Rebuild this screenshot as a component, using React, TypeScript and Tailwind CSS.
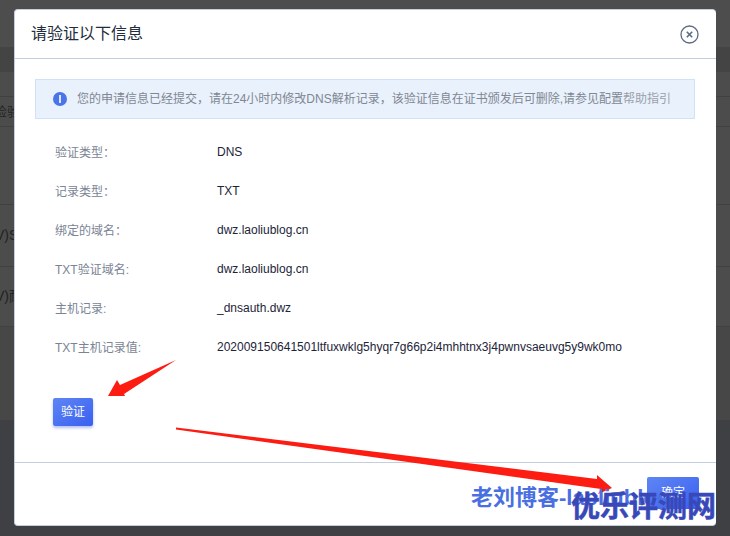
const cjk = "font-['Liberation_Sans','Noto_Sans_CJK_SC',sans-serif]";

const rows: [string, string][] = [
  ["验证类型：", "DNS"],
  ["记录类型：", "TXT"],
  ["绑定的域名：", "dwz.laoliublog.cn"],
  ["TXT验证域名:", "dwz.laoliublog.cn"],
  ["主机记录:", "_dnsauth.dwz"],
  ["TXT主机记录值:", "202009150641501ltfuxwklg5hyqr7g66p2i4mhhtnx3j4pwnvsaeuvg5y9wk0mo"],
];

function Backdrop() {
  return (
    <div className="flex h-[536px] w-[730px] flex-col overflow-hidden bg-[#4c4c4c] text-[13px] text-[#222]">
      <div className="h-[47px] shrink-0 bg-[#4d4d4d]" />
      <div className="h-[25px] shrink-0 bg-[#444444]" />
      <div className="h-[25px] shrink-0 border-b border-[#414141]" />
      <div className="flex h-[30px] shrink-0 items-center border-b border-[#414141]">
        <span className="-ml-[6px] whitespace-nowrap">检验</span>
      </div>
      <div className="h-[78px] shrink-0 border-b border-[#414141]" />
      <div className="flex h-[62px] shrink-0 items-center border-b border-[#414141]">
        <span className="-ml-[5px] whitespace-nowrap text-[14px]">V)S</span>
      </div>
      <div className="flex h-[60px] shrink-0 items-center border-b border-[#414141]">
        <span className="-ml-[5px] whitespace-nowrap text-[14px]">V)耐</span>
      </div>
      <div className="h-[93px] shrink-0 bg-[#474747]" />
      <div className="flex-1 bg-[#3f4044]" />
    </div>
  );
}

function Arrows() {
  return (
    <svg className="pointer-events-none absolute left-0 top-0" width="730" height="536" viewBox="0 0 730 536">
      <polygon points="176,360 124,394 125,396 108,396 117,380 120,385" fill="#fc1c12" />
      <polygon points="176,427.5 597,479 597,475 612,488 598,494 601,489 176,429.5" fill="#fc1c12" />
    </svg>
  );
}

export default function App() {
  return (
    <div className={`relative h-[536px] w-[730px] overflow-hidden ${cjk}`}>
      <Backdrop />
      <div className="absolute left-[14px] top-[9px] flex h-[517px] w-[702px] flex-col rounded-[4px] border border-[#c3cfdd] border-r-0 bg-white">
        <div className="flex h-[49px] shrink-0 items-center justify-between border-b border-[#c3cfdd] pl-[16px] pr-[17px]">
          <span className="text-[16px] text-[#222c3c]">请验证以下信息</span>
          <svg width="19" height="19" viewBox="0 0 19 19" fill="none" stroke="#5a6b82">
            <circle cx="9.5" cy="9.5" r="8.5" strokeWidth="1.3" />
            <path d="M6.8 6.8l5.4 5.4M12.2 6.8l-5.4 5.4" strokeWidth="1.6" />
          </svg>
        </div>
        <div className="flex flex-1 flex-col pl-[20px] pr-[21px] pt-[20px]">
          <div className="flex h-[40px] items-center gap-[10px] border border-[#cfe2f8] bg-[#e9f1fc] pl-[17px] text-[12px] text-[#7f8792]">
            <svg width="14" height="14" viewBox="0 0 14 14">
              <circle cx="7" cy="7" r="7" fill="#4a74e8" />
              <rect x="6.2" y="3" width="1.6" height="8" fill="#fff" />
            </svg>
            <span className="whitespace-nowrap">您的申请信息已经提交，请在24小时内修改DNS解析记录，该验证信息在证书颁发后可删除,请参见配置<span className="text-[#9aa0a8]">帮助指引</span></span>
          </div>
          <div className="mt-[14px] flex flex-col pl-[20px]">
            {rows.map(([label, value]) => (
              <div key={label} className="flex h-[39px] items-center text-[12px]">
                <span className="w-[162px] shrink-0 text-[#7a8494]">{label}</span>
                <span className="whitespace-nowrap pb-[2px] text-[#1c2438]">{value}</span>
              </div>
            ))}
          </div>
          <div className="mt-[31px] pl-[18px]">
            <button className="h-[28px] w-[40px] rounded-[2px] bg-gradient-to-br from-[#5f85f3] to-[#3a5ff0] text-[12px] text-white shadow-[0_2px_3px_rgba(70,100,220,0.4)]">验证</button>
          </div>
        </div>
        <div className="flex h-[63px] shrink-0 items-start justify-end border-t border-[#c3cfdd] pr-[17px] pt-[14px]">
          <button className="h-[32px] w-[52px] rounded-[2px] bg-gradient-to-br from-[#5f85f3] to-[#3a5ff0] text-[12px] text-white">确定</button>
        </div>
      </div>
      <Arrows />
      <span className="absolute left-[471px] top-[485px] whitespace-nowrap text-[22px] leading-[26px] font-bold text-[#4a6fe0]">老刘博客-laoliublog</span>
      <span className="absolute left-[571px] top-[490px] whitespace-nowrap text-[29px] leading-[34px] font-bold text-[#3848b8] [-webkit-text-stroke:0.5px_#3848b8]">优乐评测网</span>
    </div>
  );
}
